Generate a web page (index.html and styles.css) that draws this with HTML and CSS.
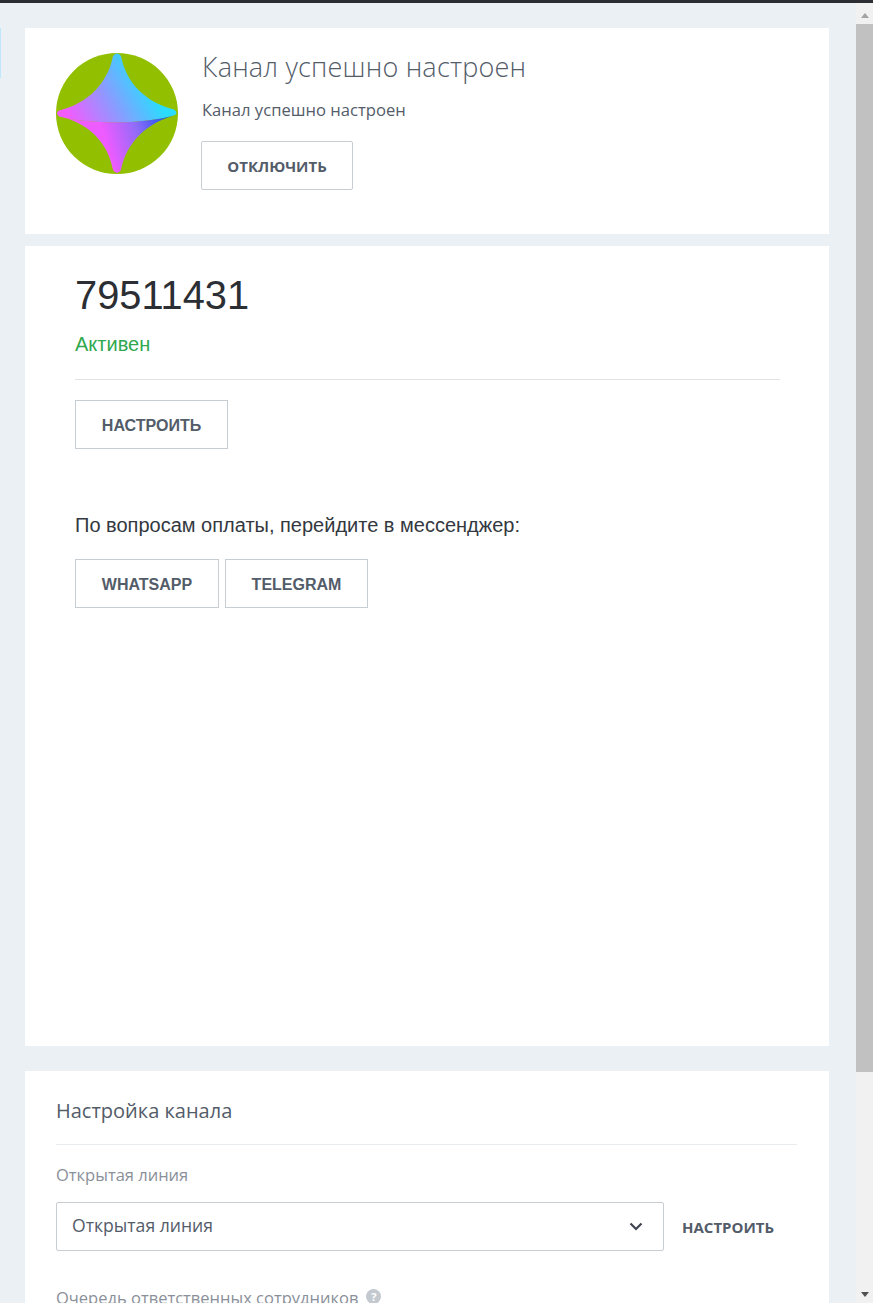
FILE: index.html
```html
<!DOCTYPE html>
<html lang="ru">
<head>
<meta charset="utf-8">
<title>Канал успешно настроен</title>
<link rel="stylesheet" href="styles.css">
</head>
<body>
<div class="topbar"></div>
<div class="window">
  <main class="page">
    <div class="edge-tab"></div>
    <section class="card card-status">
      <svg class="logo" viewBox="0 0 122 122" preserveAspectRatio="none" width="122" height="121" aria-hidden="true">
        <defs>
          <linearGradient id="upper" gradientUnits="userSpaceOnUse" x1="14" y1="66" x2="88" y2="24">
            <stop offset="0" stop-color="#f25cff"/>
            <stop offset="0.5" stop-color="#8f98ff"/>
            <stop offset="1" stop-color="#2adcff"/>
          </linearGradient>
          <linearGradient id="lower" gradientUnits="userSpaceOnUse" x1="48" y1="82" x2="112" y2="64">
            <stop offset="0" stop-color="#ee5bff"/>
            <stop offset="0.5" stop-color="#8f6cf8"/>
            <stop offset="1" stop-color="#1153f0"/>
          </linearGradient>
        </defs>
        <circle cx="61" cy="61" r="61" fill="#92c000"/>
        <path d="M57 3Q61-2 65 3C70 30 90 50 118 57Q123 60.500 118 63C90 71 40 73 3 64Q-1 60.500 3 58C32 51 52 30 57 3Z" fill="url(#upper)"/>
        <path d="M3 64C40 73 90 71 118 63C92 70 70 90 65 118Q61 124 57 118C52 90 32 70 3 64Z" fill="url(#lower)"/>
      </svg>
      <div class="status-body">
        <h1 class="status-title">Канал успешно настроен</h1>
        <p class="status-text">Канал успешно настроен</p>
        <a class="btn btn-open">ОТКЛЮЧИТЬ</a>
      </div>
    </section>

    <section class="card card-account">
      <div class="account-id">79511431</div>
      <div class="account-state">Активен</div>
      <hr class="account-rule">
      <a class="btn btn-arial btn-setup">НАСТРОИТЬ</a>
      <p class="pay-note">По вопросам оплаты, перейдите в мессенджер:</p>
      <div class="btn-row">
        <a class="btn btn-arial btn-wa">WHATSAPP</a>
        <a class="btn btn-arial btn-tg">TELEGRAM</a>
      </div>
    </section>

    <section class="card card-settings">
      <h2 class="settings-title">Настройка канала</h2>
      <label class="field-label">Открытая линия</label>
      <div class="select-row">
        <div class="select">
          <span class="select-value">Открытая линия</span>
          <svg class="chevron" viewBox="0 0 14 9" width="14" height="9" aria-hidden="true">
            <path d="M1.500 1.500L7 7l5.500-5.500" fill="none" stroke="#3f4450" stroke-width="2.200"/>
          </svg>
        </div>
        <a class="link-setup">НАСТРОИТЬ</a>
      </div>
      <div class="field-label queue-label">
        Очередь ответственных сотрудников
        <span class="hint">?</span>
      </div>
    </section>
  </main>
  <div class="scrollbar">
    <span class="arrow arrow-up"></span>
    <div class="scroll-track"><div class="scroll-thumb"></div></div>
    <span class="arrow arrow-down"></span>
  </div>
</div>
</body>
</html>
```
FILE: styles.css
```css
* { box-sizing: border-box; }
html, body { margin: 0; height: 100%; overflow: hidden; }
body {
  background: #ebf0f5;
  font-family: "Open Sans", "Liberation Sans", sans-serif;
  color: #535c69;
}
.topbar { height: 3px; background: #2b2e33; }
.window { display: flex; height: 1300px; }
.page {
  flex: 1;
  position: relative;
  padding: 25px 27px 0 25px;
  display: flex;
  flex-direction: column;
  overflow: hidden;
}
.edge-tab {
  position: absolute;
  left: 0;
  top: 25px;
  width: 1px;
  height: 50px;
  background: #bfe6fa;
}
.card { background: #fff; flex: none; }
.card-status {
  height: 206px;
  padding: 25px 0 0 31px;
  display: flex;
  align-items: flex-start;
}
.logo { flex: none; display: block; }
.status-body { margin-left: 23px; }
.status-title {
  margin: -1px 0 0 1px;
  font-size: 27px;
  font-weight: 300;
  line-height: 30px;
  letter-spacing: 0.2px;
  color: #535c69;
}
.status-text {
  margin: 17px 0 0 1px;
  font-size: 16.6px;
  line-height: 22px;
  color: #535c69;
}
.btn {
  display: inline-flex;
  align-items: center;
  justify-content: center;
  height: 49px;
  border: 1px solid #c6cdd3;
  border-radius: 2px;
  font-weight: 700;
  font-size: 15px;
  color: #535c69;
}
.btn-open { width: 152px; margin-top: 20px; padding-top: 1px; }
.card-account {
  margin-top: 12px;
  height: 800px;
  padding: 24px 49px 0 50px;
  font-family: "Liberation Sans", Arial, sans-serif;
}
.account-id {
  font-size: 39.800px;
  line-height: 50px;
  color: #2b2e33;
}
.account-state {
  margin-top: 11px;
  font-size: 20px;
  line-height: 26px;
  color: #2fa84f;
}
.account-rule {
  margin: 22px 0 20px;
  border: 0;
  height: 1px;
  background: #e1e4e7;
}
.btn-arial {
  font-family: "Liberation Sans", Arial, sans-serif;
  font-size: 16px;
  border-radius: 0;
  padding-top: 2px;
}
.btn-setup { width: 153px; }
.pay-note {
  margin: 64px 0 0;
  font-size: 20px;
  line-height: 24px;
  color: #333840;
}
.btn-row { display: flex; gap: 6px; margin-top: 22px; }
.btn-wa { width: 144px; }
.btn-tg { width: 143px; }
.card-settings {
  margin-top: 25px;
  flex: 1;
  padding: 26px 32px 0 31px;
}
.settings-title {
  margin: 0;
  padding-bottom: 19px;
  border-bottom: 1px solid #e9ecef;
  font-size: 20px;
  font-weight: 400;
  line-height: 28px;
  color: #535c69;
}
.field-label {
  display: block;
  font-size: 16.5px;
  line-height: 22px;
  color: #8a9099;
}
.card-settings .field-label:first-of-type { margin-top: 19px; }
.select-row { display: flex; align-items: center; margin-top: 16px; }
.select {
  width: 608px;
  height: 49px;
  display: flex;
  align-items: center;
  justify-content: space-between;
  padding: 0 20px 0 15px;
  border: 1px solid #c6cdd3;
  border-radius: 2px;
  font-size: 17.6px;
  color: #535c69;
}
.select-value { position: relative; top: -2px; }
.chevron { display: block; }
.link-setup {
  margin-left: 18px;
  font-size: 15px;
  font-weight: 700;
  color: #535c69;
}
.queue-label {
  margin-top: 36px;
  display: flex;
  align-items: center;
  gap: 8px;
}
.hint {
  width: 15px;
  height: 15px;
  border-radius: 50%;
  background: #c4c9cf;
  color: #fff;
  font-size: 11px;
  font-weight: 700;
  line-height: 15px;
  text-align: center;
  position: relative;
  top: -2px;
}
.scrollbar {
  flex: none;
  width: 17px;
  background: #f1f1f1;
  display: flex;
  flex-direction: column;
  height: 100%;
}
.arrow { flex: none; height: 17px; display: flex; align-items: center; justify-content: center; }
.arrow::before {
  content: "";
  width: 0;
  height: 0;
  border-left: 4.500px solid transparent;
  border-right: 4.500px solid transparent;
}
.arrow-up { height: 21px; padding-top: 3px; }
.arrow-up::before { border-bottom: 5px solid #a3a3a3; }
.arrow-down::before { border-top: 5px solid #505050; }
.scroll-track { flex: 1; }
.scroll-thumb { height: 1048px; background: #c1c1c1; }
```
